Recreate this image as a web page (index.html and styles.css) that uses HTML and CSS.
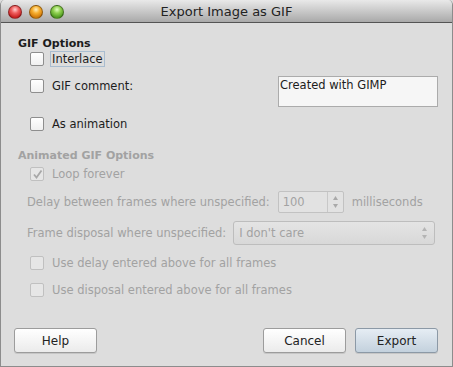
FILE: index.html
```html
<!DOCTYPE html>
<html>
<head>
    <meta charset="utf-8" />
    <title>Export Image as GIF</title>
    <link rel="stylesheet" href="styles.css">
</head>
<body>
    <div class="ablak">
        <div class="fejlec">
            <div class="lampak">
                <span class="lampa piros"></span>
                <span class="lampa sarga"></span>
                <span class="lampa zold"></span>
            </div>
            <div class="cim">Export Image as GIF</div>
        </div>

        <div class="tartalom">
            <div class="csoportcim">GIF Options</div>

            <div class="sor sor-interlace">
                <span class="doboz"></span>
                <span class="felirat fokusz">Interlace</span>
            </div>

            <div class="sor sor-komment">
                <div class="kapcsolo">
                    <span class="doboz"></span>
                    <span class="felirat">GIF comment:</span>
                </div>
                <div class="szovegmezo">Created with GIMP</div>
            </div>

            <div class="sor sor-anim">
                <span class="doboz"></span>
                <span class="felirat">As animation</span>
            </div>

            <div class="csoportcim tiltott cim-anim">Animated GIF Options</div>

            <div class="sor sor-loop tiltott">
                <span class="doboz">
                    <svg width="11" height="11" viewBox="0 0 11 11">
                        <path d="M2 5.5 L4.5 8.5 L9.5 1.5" fill="none" stroke="#a8a8a8" stroke-width="1.8" />
                    </svg>
                </span>
                <span class="felirat">Loop forever</span>
            </div>

            <div class="sor sor-delay tiltott">
                <span class="szoveg">Delay between frames where unspecified:</span>
                <div class="leptet">
                    <span class="ertek">100</span>
                    <span class="nyilak">
                        <svg width="7" height="14" viewBox="0 0 7 14">
                            <path d="M3.5 1 L6 5 L1 5 Z" fill="#a9a9a9" />
                            <path d="M3.5 13 L6 9 L1 9 Z" fill="#a9a9a9" />
                        </svg>
                    </span>
                </div>
                <span class="szoveg">milliseconds</span>
            </div>

            <div class="sor sor-disposal tiltott">
                <span class="szoveg">Frame disposal where unspecified:</span>
                <div class="legordulo">
                    <span class="ertek">I don't care</span>
                    <svg width="7" height="14" viewBox="0 0 7 14">
                        <path d="M3.5 1 L6 5 L1 5 Z" fill="#b4b4b4" />
                        <path d="M3.5 13 L6 9 L1 9 Z" fill="#b4b4b4" />
                    </svg>
                </div>
            </div>

            <div class="sor sor-usedelay tiltott">
                <span class="doboz"></span>
                <span class="felirat">Use delay entered above for all frames</span>
            </div>

            <div class="sor sor-usedisp tiltott">
                <span class="doboz"></span>
                <span class="felirat">Use disposal entered above for all frames</span>
            </div>

            <div class="gombsor">
                <button class="gomb">Help</button>
                <div class="jobb">
                    <button class="gomb">Cancel</button>
                    <button class="gomb alap">Export</button>
                </div>
            </div>
        </div>
    </div>
</body>
</html>
```

FILE: styles.css
```css
* {
    margin: 0;
    padding: 0;
    box-sizing: border-box;
}

body {
    font-family: "DejaVu Sans", sans-serif;
    font-size: 11.5px;
    color: #1c1c1c;
    background: #dcdcdc;
}

.ablak {
    width: 453px;
    height: 367px;
    background: #dddddd;
    border: 1px solid #8c8c8c;
    border-top: none;
    border-radius: 5px 5px 0 0;
    overflow: hidden;
    display: flex;
    flex-direction: column;
}

.fejlec {
    height: 23px;
    background: linear-gradient(#e9e9e9, #a9a9a9);
    border-bottom: 1px solid #545454;
    display: flex;
    align-items: center;
    position: relative;
}

.lampak {
    display: flex;
    gap: 7px;
    padding-left: 7px;
    margin-top: 1px;
}

.lampa {
    width: 14px;
    height: 14px;
    border-radius: 50%;
    border: 1px solid rgba(0, 0, 0, 0.35);
}

.piros {
    background: radial-gradient(circle at 50% 30%, #ffd0d0 0, #f06060 35%, #c82020 75%, #e85050 100%);
}

.sarga {
    background: radial-gradient(circle at 50% 30%, #fff0c0 0, #f8b030 35%, #d07808 75%, #f0a030 100%);
}

.zold {
    background: radial-gradient(circle at 50% 30%, #e0ffc0 0, #90d050 35%, #4f9a20 75%, #80c040 100%);
}

.cim {
    position: absolute;
    left: 0;
    right: 0;
    text-align: center;
    font-size: 13px;
    color: #222;
    pointer-events: none;
}

.tartalom {
    flex: 1;
    padding: 13px 0 0 0;
    display: flex;
    flex-direction: column;
}

.csoportcim {
    height: 15px;
    line-height: 15px;
    font-size: 11px;
    font-weight: bold;
    padding-left: 17px;
}

.tiltott {
    color: #a2a2a2;
}

.sor {
    display: flex;
    align-items: center;
    height: 16px;
    padding-left: 29px;
}

.doboz {
    width: 14px;
    height: 14px;
    border: 1px solid #8e8e8e;
    border-radius: 2px;
    background: linear-gradient(#ffffff, #f0f0f0);
    display: flex;
    align-items: center;
    justify-content: center;
    flex-shrink: 0;
}

.tiltott .doboz {
    border-color: #c0c0c0;
    background: #e6e6e6;
}

.felirat {
    margin-left: 6px;
    padding: 0 1px;
    line-height: 14px;
    border: 1px solid transparent;
}

.fokusz {
    border-color: #a9bdd0;
}

.sor-komment {
    margin-top: 9px;
    height: 31px;
    align-items: flex-start;
}

.kapcsolo {
    display: flex;
    align-items: center;
    height: 16px;
    margin-top: 2px;
    width: 248px;
}

.szovegmezo {
    width: 160px;
    height: 31px;
    background: #f6f6f6;
    border: 1px solid #ababab;
    padding: 2px 1px;
    line-height: 13px;
}

.sor-anim {
    margin-top: 9px;
}

.cim-anim {
    margin-top: 16px;
}

.sor-loop {
    margin-top: 3px;
}

.sor-delay {
    margin-top: 9px;
    height: 22px;
    padding-left: 26px;
}

.leptet {
    width: 66px;
    height: 22px;
    margin: 0 8px;
    border: 1px solid #c2c2c2;
    border-radius: 2px;
    background: #e2e2e2;
    display: flex;
}

.leptet .ertek {
    flex: 1;
    padding-left: 4px;
    line-height: 20px;
}

.nyilak {
    width: 16px;
    border-left: 1px solid #c8c8c8;
    display: flex;
    align-items: center;
    justify-content: center;
}

.sor-disposal {
    margin-top: 8px;
    height: 24px;
    padding-left: 26px;
}

.legordulo {
    width: 202px;
    height: 24px;
    margin-left: 7px;
    border: 1px solid #bdbdbd;
    border-radius: 3px;
    background: linear-gradient(#e4e4e4, #d8d8d8);
    display: flex;
    align-items: center;
    padding: 0 6px 0 5px;
}

.legordulo .ertek {
    flex: 1;
}

.sor-usedelay {
    margin-top: 10px;
}

.sor-usedisp {
    margin-top: 11px;
}

.gombsor {
    margin-top: 30px;
    display: flex;
    justify-content: space-between;
    padding: 0 14px 0 13px;
}

.jobb {
    display: flex;
    gap: 9px;
}

.gomb {
    width: 83px;
    height: 25px;
    font-family: "DejaVu Sans", sans-serif;
    font-size: 12px;
    color: #222;
    border: 1px solid #9c9c9c;
    border-radius: 3px;
    background: linear-gradient(#ffffff, #ebebeb);
    box-shadow: 0 1px 0 rgba(0, 0, 0, 0.1);
}

.gomb.alap {
    background: linear-gradient(#e6edf4, #c3d1dd);
    border-color: #8c99a6;
}
```
